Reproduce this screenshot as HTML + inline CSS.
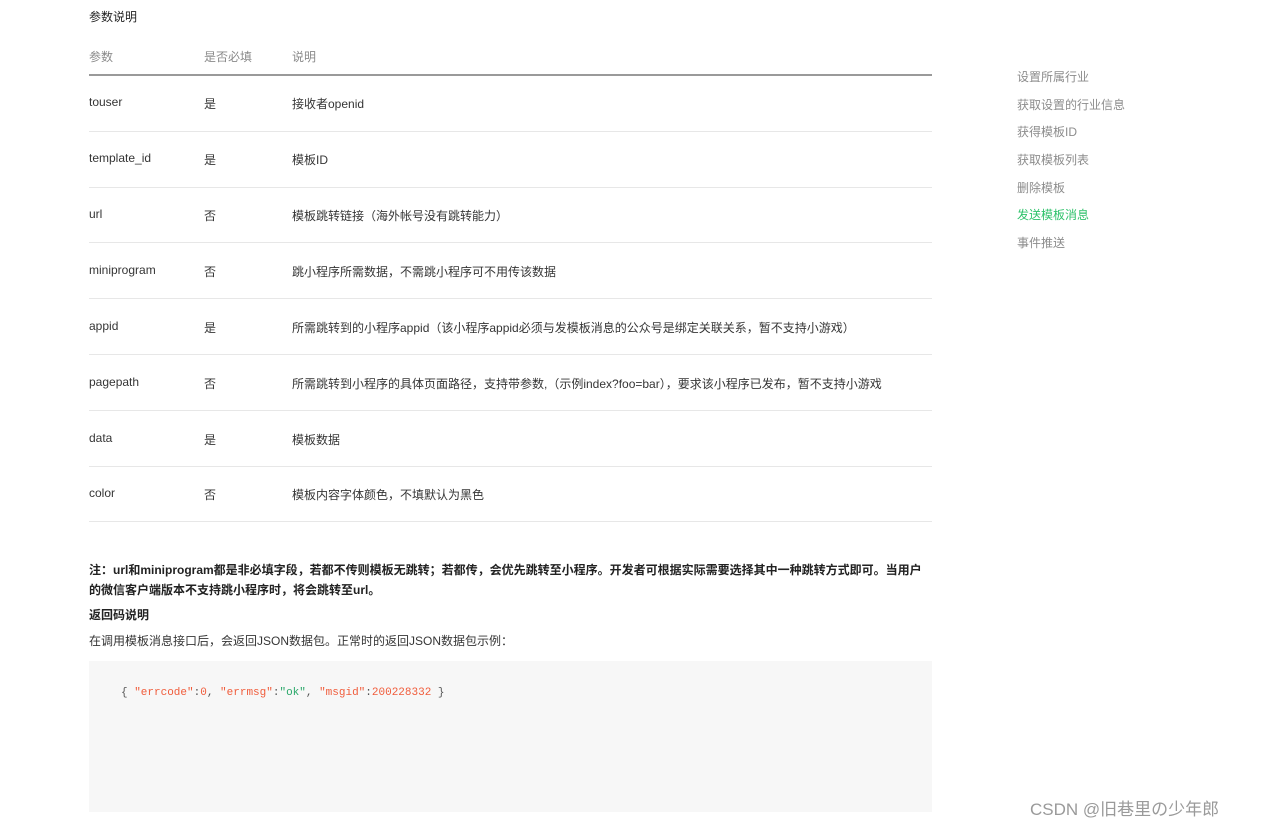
<!DOCTYPE html>
<html><head><meta charset="utf-8"><style>
body{margin:0;width:1280px;height:825px;background:#fff;position:relative;overflow:hidden;font-family:"Liberation Sans","Noto Sans CJK SC",sans-serif;font-size:12px;color:#353535}
.a{position:absolute;white-space:nowrap}
.hl{position:absolute;left:89px;width:843px;height:1px;background:#e7e7e7}
.g{color:#8a8a8a}
.nav{position:absolute;left:1017px;color:#8c8c8c;font-size:12px}
code,pre{font-family:"Liberation Mono","Noto Sans CJK SC",monospace;font-size:11px}
.r{color:#f05c3b}
</style></head><body>
<div class="a" style="left:89px;top:8px;color:#222">参数说明</div>
<div class="a g" style="left:89px;top:48px">参数</div>
<div class="a g" style="left:204px;top:48px">是否必填</div>
<div class="a g" style="left:292px;top:48px">说明</div>
<div class="hl" style="top:74px;height:2px;background:#9a9a9a"></div>

<div class="a" style="left:89px;top:95px">touser</div><div class="a" style="left:204px;top:95px">是</div><div class="a" style="left:292px;top:95px">接收者openid</div>
<div class="hl" style="top:131px"></div>
<div class="a" style="left:89px;top:151px">template_id</div><div class="a" style="left:204px;top:151px">是</div><div class="a" style="left:292px;top:151px">模板ID</div>
<div class="hl" style="top:187px"></div>
<div class="a" style="left:89px;top:207px">url</div><div class="a" style="left:204px;top:207px">否</div><div class="a" style="left:292px;top:207px">模板跳转链接（海外帐号没有跳转能力）</div>
<div class="hl" style="top:242px"></div>
<div class="a" style="left:89px;top:263px">miniprogram</div><div class="a" style="left:204px;top:263px">否</div><div class="a" style="left:292px;top:263px">跳小程序所需数据，不需跳小程序可不用传该数据</div>
<div class="hl" style="top:298px"></div>
<div class="a" style="left:89px;top:319px">appid</div><div class="a" style="left:204px;top:319px">是</div><div class="a" style="left:292px;top:319px">所需跳转到的小程序appid（该小程序appid必须与发模板消息的公众号是绑定关联关系，暂不支持小游戏）</div>
<div class="hl" style="top:354px"></div>
<div class="a" style="left:89px;top:375px">pagepath</div><div class="a" style="left:204px;top:375px">否</div><div class="a" style="left:292px;top:375px">所需跳转到小程序的具体页面路径，支持带参数,（示例index?foo=bar），要求该小程序已发布，暂不支持小游戏</div>
<div class="hl" style="top:410px"></div>
<div class="a" style="left:89px;top:431px">data</div><div class="a" style="left:204px;top:431px">是</div><div class="a" style="left:292px;top:431px">模板数据</div>
<div class="hl" style="top:466px"></div>
<div class="a" style="left:89px;top:486px">color</div><div class="a" style="left:204px;top:486px">否</div><div class="a" style="left:292px;top:486px">模板内容字体颜色，不填默认为黑色</div>
<div class="hl" style="top:521px"></div>

<div class="a" style="left:89px;top:560px;width:843px;white-space:normal;font-weight:bold;color:#222;line-height:20px">注：url和miniprogram都是非必填字段，若都不传则模板无跳转；若都传，会优先跳转至小程序。开发者可根据实际需要选择其中一种跳转方式即可。当用户的微信客户端版本不支持跳小程序时，将会跳转至url。</div>
<div class="a" style="left:89px;top:606px;font-weight:bold;color:#222">返回码说明</div>
<div class="a" style="left:89px;top:632px">在调用模板消息接口后，会返回JSON数据包。正常时的返回JSON数据包示例：</div>
<div style="position:absolute;left:89px;top:661px;width:843px;height:151px;background:#f7f7f7"></div>
<pre class="a" style="left:121px;top:683px;margin:0;line-height:20px;color:#555">{
   <span class="r">"errcode"</span>:<span class="r">0</span>,
    <span class="r">"errmsg"</span>:<span style="color:#2aa86a">"ok"</span>,
    <span class="r">"msgid"</span>:<span class="r">200228332</span>
 }</pre>

<div class="nav" style="top:68px">设置所属行业</div>
<div class="nav" style="top:96px">获取设置的行业信息</div>
<div class="nav" style="top:123px">获得模板ID</div>
<div class="nav" style="top:151px">获取模板列表</div>
<div class="nav" style="top:179px">删除模板</div>
<div class="nav" style="top:206px;color:#2fc26b">发送模板消息</div>
<div class="nav" style="top:234px">事件推送</div>

<div class="a" style="left:1030px;top:795px;font-size:17px;color:#9a9a9a">CSDN @旧巷里の少年郎</div>
</body></html>
